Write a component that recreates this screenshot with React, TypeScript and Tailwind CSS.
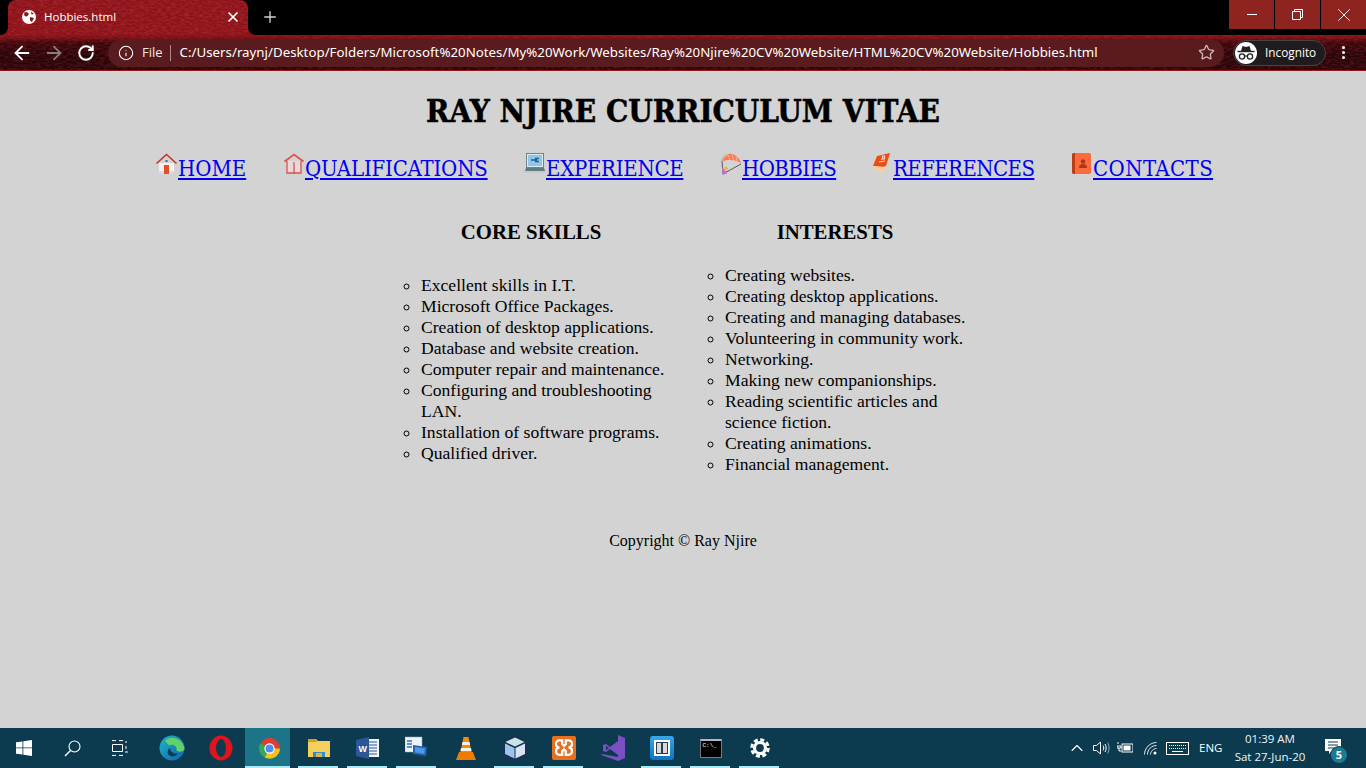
import React from "react";
import { ArrowLeft, ArrowRight, RotateCw, Star, Plus, X, Info, ChevronUp } from "lucide-react";

const slab = "font-['DejaVu_Serif_Condensed','DejaVu_Serif',serif]";

const HomeIcon = () => (
  <svg width="23" height="22" viewBox="0 0 23 22">
    <path d="M4 10h15v11H4z" fill="#f4f1f6" />
    <path d="M4 18h15v3H4z" fill="#dcd8ea" />
    <path d="M1.500 10.500 11.500 1.500l10 9" fill="none" stroke="#c8302a" strokeWidth="1.600" />
    <path d="M9 12h5v9H9z" fill="#e2521f" />
    <path d="M10.500 7h2v2h-2z" fill="#2f6f9e" />
  </svg>
);

const BookIcon = () => (
  <svg width="22" height="22" viewBox="0 0 22 22">
    <path d="M4 8v12h14V8" fill="#e8d9d6" stroke="#d9534f" strokeWidth="1.300" />
    <path d="M1.500 8.500 11 1.500l9.500 7" fill="none" stroke="#e0524c" strokeWidth="1.800" />
    <path d="M11 9v12" stroke="#d9534f" strokeWidth="1.300" />
  </svg>
);

const LaptopIcon = () => (
  <svg width="23" height="22" viewBox="0 0 23 22">
    <rect x="3.500" y="0.500" width="17" height="14" fill="#dfe8ee" stroke="#6d8390" />
    <rect x="5" y="2" width="14" height="11" fill="#8fc7ea" />
    <path d="M8 7h6M12 5.500h4M12 8.500h4" stroke="#1d5f99" strokeWidth="1.400" />
    <path d="M3 15h18l1 3H2z" fill="#5f7c86" />
    <path d="M0 19h24" stroke="#bcc8c4" strokeWidth="1.200" />
  </svg>
);

const ParachuteIcon = () => (
  <svg width="22" height="24" viewBox="0 0 22 24">
    <path d="M1 8C2 3 7 0 12 1c4 1 8 5 9 9-5-3-13-4-17-2z" fill="#ff7a52" />
    <path d="M8 2l2 5M12 2l2 6M16 4l1 5" stroke="#ffb39c" strokeWidth="1" />
    <path d="M1.500 8C2 5 5 2 8 1.500" fill="none" stroke="#c9c0b5" strokeWidth="1.800" />
    <path d="M2 8 3 21 21 11" fill="none" stroke="#5e5462" strokeWidth="1" />
    <path d="M2 14l.5 8 5-2z" fill="#bb72cf" />
    <circle cx="6" cy="15.500" r="2" fill="#f2b63c" />
  </svg>
);

const OrangeBookIcon = () => (
  <svg width="20" height="20" viewBox="0 0 20 20">
    <path d="M1 13 5 3l13-3-4 13-3 1z" fill="#ee4c12" />
    <path d="M1 13l12 1 1-1-1 5-3 2-8-3z" fill="#f3cfa6" />
    <path d="M7 9l6-1M9 6.500l4-1M10.500 3h2v3h-2z" stroke="#fbd9bf" strokeWidth="1.200" fill="none" />
  </svg>
);

const ContactIcon = () => (
  <svg width="20" height="22" viewBox="0 0 20 22">
    <rect x="0" y="0" width="19" height="21" rx="2" fill="#ff6a3c" />
    <path d="M0 2a2 2 0 0 1 2-2h1v21H2a2 2 0 0 1-2-2z" fill="#b93d17" />
    <circle cx="11" cy="8.500" r="2.300" fill="#a83a1a" />
    <path d="M7 15c0-3 1.500-4 4-4s4 1 4 4z" fill="#a83a1a" />
  </svg>
);

const navItems = [
  { label: "HOME", icon: <HomeIcon />, width: "w-[68px] tracking-[0px]" },
  { label: "QUALIFICATIONS", icon: <BookIcon />, width: "w-[182px] tracking-[-0.2px]" },
  { label: "EXPERIENCE", icon: <LaptopIcon />, width: "w-[137px] tracking-[-0.3px]" },
  { label: "HOBBIES", icon: <ParachuteIcon />, width: "w-[92px] tracking-[-0.6px]" },
  { label: "REFERENCES", icon: <OrangeBookIcon />, width: "w-[141px] tracking-[-0.6px]" },
  { label: "CONTACTS", icon: <ContactIcon />, width: "w-[118px] tracking-[0.4px]" },
];

const coreSkills = [
  "Excellent skills in I.T.",
  "Microsoft Office Packages.",
  "Creation of desktop applications.",
  "Database and website creation.",
  "Computer repair and maintenance.",
  "Configuring and troubleshooting LAN.",
  "Installation of software programs.",
  "Qualified driver.",
];

const interests = [
  "Creating websites.",
  "Creating desktop applications.",
  "Creating and managing databases.",
  "Volunteering in community work.",
  "Networking.",
  "Making new companionships.",
  "Reading scientific articles and science fiction.",
  "Creating animations.",
  "Financial management.",
];

const Theme = ({ id, fade }: { id: string; fade: string }) => (
  <svg className={`absolute inset-0 w-full h-full ${fade}`} xmlns="http://www.w3.org/2000/svg">
    <filter id={id} x="0" y="0" width="100%" height="100%">
      <feTurbulence type="fractalNoise" baseFrequency="0.22 0.55" numOctaves="4" seed="7" />
      <feColorMatrix values="0 0 0 0 0.62  0 0 0 0 0.05  0 0 0 0 0.08  1.800 0 0 0 -0.600" />
    </filter>
    <rect width="100%" height="100%" filter={`url(#${id})`} />
  </svg>
);

const GlobeIcon = () => (
  <svg width="16" height="16" viewBox="0 0 16 16">
    <circle cx="8" cy="8" r="7" fill="#fff" />
    <path d="M3 3.500 6 3l2 2-2 2.500L3.500 7zM9 8l4 1-2 4-2-1.500zM10 2.500l3 2.500-2.500.5z" fill="#8a1418" />
  </svg>
);

const IncognitoIcon = () => (
  <svg width="18" height="16" viewBox="0 0 18 16">
    <path d="M4 6l1.500-5L9 2l3.500-1L14 6z" fill="#222" />
    <path d="M0.500 6.500h17" stroke="#222" strokeWidth="1.400" />
    <circle cx="5" cy="11.500" r="2.600" fill="none" stroke="#222" strokeWidth="1.300" />
    <circle cx="13" cy="11.500" r="2.600" fill="none" stroke="#222" strokeWidth="1.300" />
    <path d="M7.500 11h3" stroke="#222" strokeWidth="1.200" />
  </svg>
);

const WindowButton = ({ children }: { children: React.ReactNode }) => (
  <div className="w-[45px] h-[29px] bg-[#8e2420] flex items-center justify-center text-white">{children}</div>
);

const Browser = () => (
  <div className="relative h-[71px] bg-[#1a0305] overflow-hidden shrink-0 border-b border-[#8a1a1c] font-['Open_Sans',sans-serif]">
    <div className="absolute left-0 right-0 top-[34px] h-[36px] bg-[linear-gradient(180deg,#8a1318_0%,#7a1014_10%,#3a0608_24%,#240406_60%,#280507_100%)]">
      <Theme id="grain-toolbar" fade="opacity-30" />
    </div>
    <div className="relative h-[35px] flex bg-black">
      {/* active tab with flared bottom corners */}
      <div className="relative ml-2 w-[240px] h-[35px]">
        <div className="absolute -left-2 bottom-0 w-2 h-2 bg-[#8a1318]">
          <div className="w-full h-full bg-black rounded-br-lg" />
        </div>
        <div className="absolute -right-2 bottom-0 w-2 h-2 bg-[#8a1318]">
          <div className="w-full h-full bg-black rounded-bl-lg" />
        </div>
        <div className="relative h-full rounded-t-lg bg-[#8a1318] overflow-hidden flex items-center pl-[13px] pr-[7px] text-white">
          <Theme id="grain-tab" fade="opacity-45" />
          <div className="relative flex items-center w-full -mt-px">
            <GlobeIcon />
            <span className="ml-[7px] text-[11.5px] flex-1">Hobbies.html</span>
            <X size={16} strokeWidth={2.600} />
          </div>
        </div>
      </div>
      <div className="ml-[13px] mt-[8px] text-[#d9d2d2] h-[18px]">
        <Plus size={18} strokeWidth={1.800} />
      </div>
      <div className="ml-auto flex gap-px self-start">
        <WindowButton>
          <div className="w-[10px] h-px bg-white" />
        </WindowButton>
        <WindowButton>
          <svg width="11" height="11" viewBox="0 0 11 11" fill="none" stroke="#fff">
            <path d="M.5 2.500h8v8h-8zM2.500 2.500v-2h8v8h-2" />
          </svg>
        </WindowButton>
        <WindowButton>
          <X size={22} strokeWidth={1} />
        </WindowButton>
      </div>
    </div>
    <div className="relative h-[35px] flex items-center text-white">
      <div className="w-[108px] flex items-center pl-[6px]">
        <div className="w-[32px] flex justify-center">
          <ArrowLeft size={22} strokeWidth={2} />
        </div>
        <div className="w-[32px] flex justify-center">
          <ArrowRight size={22} strokeWidth={2} className="text-[#8d7b7c]" />
        </div>
        <div className="w-[32px] flex justify-center">
          <RotateCw size={18} strokeWidth={2.600} />
        </div>
      </div>
      <div className="w-[1116px] h-[28px] rounded-full bg-[#591b1d] flex items-center pl-[10px] pr-[9px]">
        <Info size={16} strokeWidth={1.600} />
        <span className="ml-[8px] text-[13px] text-[#f1e7e7]">File</span>
        <div className="ml-[7px] mr-[9px] w-px h-[16px] bg-[#a88a8a]" />
        <span className="flex-1 text-[13.300px] whitespace-nowrap font-['Noto_Sans',sans-serif]">
          C:/Users/raynj/Desktop/Folders/Microsoft%20Notes/My%20Work/Websites/Ray%20Njire%20CV%20Website/HTML%20CV%20Website/Hobbies.html
        </span>
        <Star size={17} strokeWidth={1.800} className="text-[#c9b9b9]" />
      </div>
      <div className="ml-[9px] w-[93px] h-[26px] rounded-full bg-[#201c1e] border border-[#4a4345] flex items-center pl-[1px]">
        <div className="w-[22px] h-[22px] rounded-full bg-white flex items-center justify-center">
          <IncognitoIcon />
        </div>
        <span className="ml-[8px] text-[11.800px]">Incognito</span>
      </div>
      <div className="ml-[16px] flex flex-col gap-[2px]">
        <div className="w-[3px] h-[3px] rounded-full bg-white" />
        <div className="w-[3px] h-[3px] rounded-full bg-white" />
        <div className="w-[3px] h-[3px] rounded-full bg-white" />
      </div>
    </div>
  </div>
);

const SkillColumn = ({ title, items, offset }: { title: string; items: string[]; offset: string }) => (
  <div className="w-[300px]">
    <h2 className="text-center text-[20.800px] leading-[24px] font-bold">{title}</h2>
    <ul className={`${offset} pl-10 list-[circle] text-[17.600px] leading-[21px]`}>
      {items.map((item) => (
        <li key={item}>{item}</li>
      ))}
    </ul>
  </div>
);

const Page = () => (
  <div className="flex-1 bg-[#d3d3d3] text-black font-['Liberation_Serif',serif]">
    <h1 className={`${slab} mt-[20px] text-center text-[31.200px] leading-[40px] font-bold [-webkit-text-stroke:0.5px_black]`}>
      RAY NJIRE CURRICULUM VITAE
    </h1>
    <nav className={`${slab} mt-[24px] flex justify-center gap-[36px] text-[22px] leading-[28px]`}>
      {navItems.map((item) => (
        <a key={item.label} className="flex items-start text-[#0000ee]">
          <span className="w-[23px] h-[22px] flex justify-center -mt-[2px] shrink-0">{item.icon}</span>
          <span className={`${item.width} underline whitespace-nowrap`}>{item.label}</span>
        </a>
      ))}
    </nav>
    <div className="mt-[37px] flex justify-center gap-[4px]">
      <SkillColumn title="CORE SKILLS" items={coreSkills} offset="mt-[31px]" />
      <SkillColumn title="INTERESTS" items={interests} offset="mt-[21px]" />
    </div>
    <p className="mt-[57px] text-center text-[16px] leading-[18px]">Copyright © Ray Njire</p>
  </div>
);

const Underlined = ({ on, children }: { on?: boolean; children: React.ReactNode }) => (
  <div className="relative w-[49px] h-full flex items-center justify-center">
    {children}
    {on && <div className="absolute bottom-0 left-[4px] right-[5px] h-[2px] bg-[#a9ecf7]" />}
  </div>
);

const Taskbar = () => (
  <div className="h-[40px] shrink-0 flex items-center text-white bg-[#0c3b4f] font-['Open_Sans',sans-serif]">
    <div className="w-[48px] h-full flex items-center justify-center">
      <svg width="16" height="16" viewBox="0 0 16 16" fill="#fff">
        <path d="M0 2.300 6.500 1.400V7.500H0zM7.300 1.300 16 0V7.500H7.300zM0 8.300H6.500V14.500L0 13.700zM7.300 8.300H16V16L7.300 14.700z" />
      </svg>
    </div>
    <div className="w-[48px] h-full flex items-center justify-center">
      <svg width="17" height="17" viewBox="0 0 17 17" fill="none" stroke="#fff" strokeWidth="1.100">
        <circle cx="10.500" cy="6.500" r="5.500" />
        <path d="M6.500 10.500 1 16" strokeWidth="1.400" />
      </svg>
    </div>
    <div className="w-[48px] h-full flex items-center justify-center">
      <svg width="16" height="16" viewBox="0 0 16 16" fill="none" stroke="#fff" strokeWidth="1">
        <path d="M0 .6h4M7 .6h4M0 15.400h4M7 15.400h4M.5 4.500h10v7H.5zM14 1v2M14 6v3" />
        <path d="M13 12h3" />
      </svg>
    </div>
    <div className="w-[3px]" />
    <Underlined>
      <svg width="26" height="26" viewBox="0 0 26 26">
        <defs>
          <linearGradient id="edge" x1="0" y1="0" x2="1" y2="1">
            <stop offset="0" stopColor="#1fb4c8" />
            <stop offset="1" stopColor="#1263ad" />
          </linearGradient>
        </defs>
        <circle cx="13" cy="13" r="12.500" fill="url(#edge)" />
        <path d="M6 6c5-6 17-4 19.500 7 .3 4-6 4.500-8 2.500 1-4-3-7-7.500-5z" fill="#5fd36a" />
        <path d="M11 13c0 4 4 6 8 5.500-3 4-8 3.500-10 .5-1-2 0-5 2-6z" fill="#0d3a55" />
      </svg>
    </Underlined>
    <Underlined>
      <svg width="24" height="26" viewBox="0 0 24 26">
        <ellipse cx="12" cy="13" rx="11.500" ry="12.500" fill="#e0141d" />
        <ellipse cx="12" cy="13" rx="5" ry="9" fill="#0c3b4f" />
      </svg>
    </Underlined>
    <div className="relative w-[45px] mr-[4px] h-full flex items-center justify-center pl-[4px] bg-[#1c7488]">
      <svg width="23" height="23" viewBox="0 0 24 24">
        <path d="M12 12 2.500 6.500A11 11 0 0 1 23 12H12z" fill="#e33b2e" />
        <path d="M12 12 7 21.500A11 11 0 0 1 2.500 6.500z" fill="#36a852" />
        <path d="M12 12h11A11 11 0 0 1 7 21.500z" fill="#fbc116" />
        <circle cx="12" cy="12" r="5.400" fill="#fff" />
        <circle cx="12" cy="12" r="4.200" fill="#4d8ef0" />
      </svg>
      <div className="absolute bottom-0 left-0 right-0 h-[2px] bg-[#a9ecf7]" />
    </div>
    <Underlined on>
      <svg width="22" height="20" viewBox="0 0 22 20">
        <path d="M0 1h8l2 2h12v16H0z" fill="#f5cf5b" />
        <path d="M0 1h8l1 3H0z" fill="#d79d1f" />
        <path d="M5 14h12v5H5z" fill="#2a8ecf" />
        <path d="M8 15h6v4H8z" fill="#e8b23a" />
      </svg>
    </Underlined>
    <Underlined on>
      <svg width="23" height="22" viewBox="0 0 23 22">
        <path d="M9 2h14v18H9z" fill="#f2f6fb" />
        <path d="M12 5h9M12 8h9M12 11h9M12 14h9M12 17h9" stroke="#2b579a" strokeWidth="1.200" />
        <path d="M0 3 13 0v22L0 19z" fill="#2b579a" />
        <text x="2.500" y="14.500" fontSize="9" fontWeight="700" fill="#fff" fontFamily="Liberation Sans, sans-serif">W</text>
      </svg>
    </Underlined>
    <Underlined on>
      <svg width="23" height="24" viewBox="0 0 23 24">
        <rect x="0" y="1" width="17" height="15" fill="#eef2f6" stroke="#9ab" strokeWidth=".5" />
        <path d="M2 5h5M2 8h5M2 11h5" stroke="#2870c8" strokeWidth="1.300" />
        <path d="M8 9l14 2-1 9-13-2z" fill="#2263b5" />
        <path d="M10 11l10 1.500-.7 5.500-9.300-1.500z" fill="#4b98e6" />
        <path d="M5 19l13 3 3-1-11-3z" fill="#2b3946" />
      </svg>
    </Underlined>
    <Underlined>
      <svg width="20" height="23" viewBox="0 0 20 23">
        <path d="M7.500 0h5l3 15h-11z" fill="#f58a0c" />
        <path d="M6.500 5h7l.6 3H5.900zM5 11h10l.6 3H4.400z" fill="#f4f1e8" />
        <path d="M3 15h14l3 8H0z" fill="#ef7c00" />
      </svg>
    </Underlined>
    <Underlined on>
      <svg width="24" height="26" viewBox="0 0 24 26">
        <path d="M12 0 24 6v14l-12 6-12-6V6z" fill="#1c2f55" />
        <path d="M12 2.500l9.500 4.500L12 11.500 2.500 7z" fill="#c6e6e3" />
        <path d="M2 8.500l9.500 4.500v10.500L2 19z" fill="#9cc4ea" />
        <path d="M22 8.500 12.500 13v10.500L22 19z" fill="#d7e3ef" />
      </svg>
    </Underlined>
    <Underlined on>
      <div className="w-[24px] h-[24px] rounded-[2px] bg-[#e86f1e] flex items-center justify-center">
        <svg width="18" height="18" viewBox="0 0 18 18" fill="none" stroke="#fff" strokeWidth="2.600">
          <path d="M4 1h3v4l2 2 2-2V1h3a3 3 0 0 1 0 8 3 3 0 0 1 0 8h-3v-4l-2-2-2 2v4H4a3 3 0 0 1 0-8 3 3 0 0 1 0-8z" transform="translate(.9 .5) scale(.9)" />
        </svg>
      </div>
    </Underlined>
    <Underlined>
      <svg width="24" height="26" viewBox="0 0 24 26">
        <path d="M17 0l7 3v20l-7 3L0 20l1-1 16 3zM17 6 9 12l-4-3-3 1v6l3 1 4-3 8 6z" fill="#7b4fc4" />
        <path d="M5 11l3 2-3 2z" fill="#0c3b4f" />
      </svg>
    </Underlined>
    <Underlined on>
      <div className="w-[24px] h-[24px] rounded-[3px] bg-gradient-to-b from-[#36a9ea] to-[#0d74c0] flex items-center justify-center">
        <div className="w-[16px] h-[16px] border-2 border-white bg-[#2d3e4a] flex justify-center py-[1px]">
          <div className="w-[4px] bg-[#d8d8d8] mx-[1px]" />
          <div className="w-[4px] bg-[#d8d8d8] mx-[1px]" />
        </div>
      </div>
    </Underlined>
    <Underlined on>
      <div className="w-[22px] h-[19px] bg-black border-t-2 border-[#b5b5b5] border-x border-b border-x-[#777] border-b-[#777] pl-[2px] pt-[1px] text-[6px] leading-[7px] font-['Liberation_Mono',monospace] text-white">
        C:\_
      </div>
    </Underlined>
    <Underlined on>
      <svg width="20" height="20" viewBox="0 0 20 20" fill="none" stroke="#fff">
        <circle cx="10" cy="10" r="5.500" strokeWidth="3.200" />
        <circle cx="10" cy="10" r="8.300" strokeWidth="3" strokeDasharray="4 2.520" />
      </svg>
    </Underlined>

    <div className="ml-auto h-full flex items-center">
      <ChevronUp size={20} strokeWidth={1.300} />
      <svg className="ml-[6px]" width="17" height="14" viewBox="0 0 17 14" fill="none" stroke="#fff" strokeWidth="1">
        <path d="M.5 4.500h3L7.500 1v12l-4-3.500h-3z" />
        <path d="M10 4.500c1 1.500 1 3.500 0 5M12 3c1.500 2 1.500 6 0 8" />
        <path d="M14.500 1.500c2 3 2 8 0 11" stroke="#9ab" />
      </svg>
      <svg className="ml-[7px]" width="16" height="12" viewBox="0 0 16 12">
        <path d="M0 1h2M0 4h4v2H0zM2 6v3h2" stroke="#fff" fill="none" />
        <rect x="5" y="2" width="11" height="8" fill="none" stroke="#fff" />
        <rect x="6.500" y="3.500" width="7" height="5" fill="#fff" />
      </svg>
      <svg className="ml-[11px]" width="14" height="13" viewBox="0 0 14 13" fill="none" stroke="#dfe9ee" strokeWidth="1">
        <path d="M.5 12.500C.5 6 6 .5 12.500.5M3.500 12.500c0-5 4-9 9-9M6.500 12.500c0-3 3-6 6-6" />
        <circle cx="11" cy="11" r="1.500" fill="#fff" stroke="none" />
      </svg>
      <svg className="ml-[8px]" width="23" height="13" viewBox="0 0 23 13" fill="none" stroke="#fff">
        <rect x=".5" y=".5" width="22" height="12" />
        <path d="M3 3.500h17M3 6.500h17" strokeDasharray="1 1" />
        <path d="M6 9.500h11" />
      </svg>
      <span className="ml-[10px] w-[24px] text-[11.500px]">ENG</span>
      <div className="ml-[9px] w-[76px] text-center text-[11.500px] leading-[18px] text-[#eef4f6]">
        <div>01:39 AM</div>
        <div>Sat 27-Jun-20</div>
      </div>
      <div className="relative ml-[17px] mr-[25px] w-[16px] h-[16px] -mt-[2px]">
        <svg width="16" height="16" viewBox="0 0 16 16">
          <path d="M0 0h16v12H7l-3 3v-3H0z" fill="#fff" />
          <path d="M3 3h10M3 6h10M3 9h7" stroke="#0c3b4f" />
        </svg>
        <div className="absolute -right-[7px] top-[7px] w-[18px] h-[18px] rounded-full bg-[#1c7a92] border border-[#0c3b4f] text-[11px] leading-[16px] text-center font-bold">5</div>
      </div>
    </div>
  </div>
);

export default function App() {
  return (
    <div className="h-screen flex flex-col overflow-hidden">
      <Browser />
      <Page />
      <Taskbar />
    </div>
  );
}
